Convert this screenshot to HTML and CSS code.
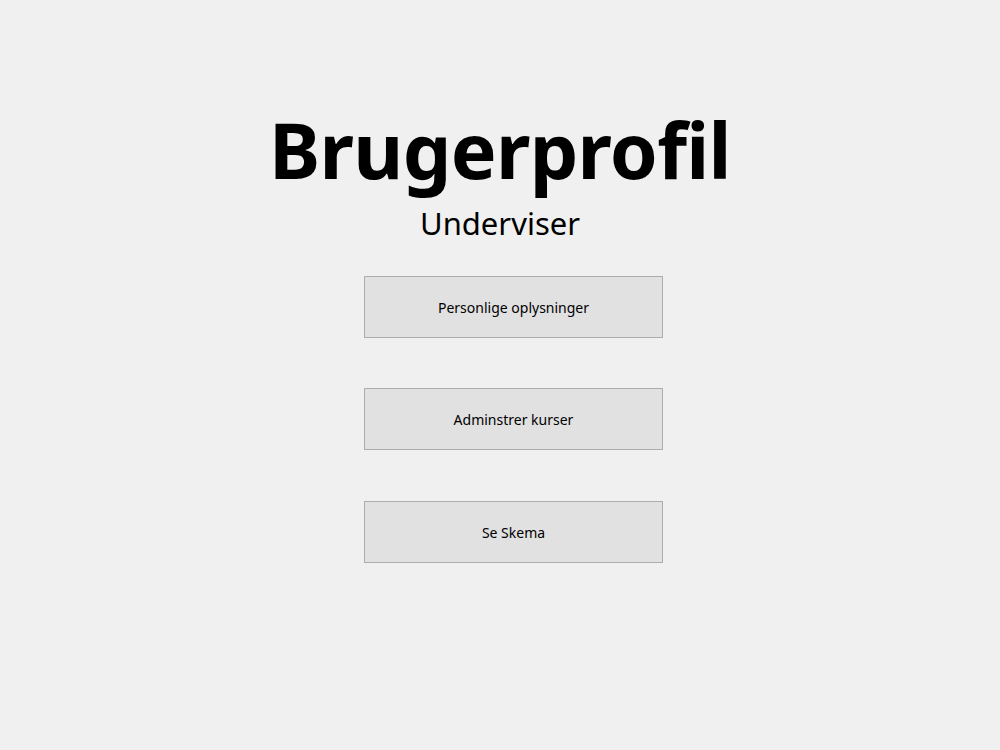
FILE: index.html
```html
<!DOCTYPE html>
<html lang="da">
<head>
<meta charset="utf-8">
<title>Brugerprofil</title>
<link rel="stylesheet" href="styles.css">
</head>
<body>
<main class="page">
  <h1 class="title">Brugerprofil</h1>
  <p class="subtitle">Underviser</p>
  <div class="actions">
    <button class="btn" type="button">Personlige oplysninger</button>
    <button class="btn" type="button">Adminstrer kurser</button>
    <button class="btn btn-last" type="button">Se Skema</button>
  </div>
</main>
</body>
</html>
```

FILE: styles.css
```css
html, body {
  margin: 0;
  padding: 0;
  background: #f0f0f0;
  width: 1000px;
  height: 750px;
  overflow: hidden;
}
.page {
  display: flex;
  flex-direction: column;
  align-items: center;
  padding-top: 110px;
  font-family: "Noto Sans", "Open Sans", sans-serif;
  color: #000;
}
.title {
  margin: 0;
  font-size: 77px;
  line-height: 80px;
  font-weight: 700;
  letter-spacing: -0.7px;
}
.subtitle {
  margin: 13px 0 0 0;
  font-size: 31px;
  line-height: 40px;
  font-weight: 400;
}
.actions {
  margin-top: 33px;
  display: flex;
  flex-direction: column;
  gap: 50px;
  margin-left: 27px;
}
.btn {
  width: 299px;
  height: 62px;
  box-sizing: border-box;
  background: #e1e1e1;
  border: 1px solid #adadad;
  border-radius: 0;
  font-family: "Noto Sans", "Open Sans", sans-serif;
  font-size: 14px;
  color: #000;
  padding: 0;
  display: flex;
  align-items: center;
  justify-content: center;
}
.btn-last {
  margin-top: 1px;
}
```
